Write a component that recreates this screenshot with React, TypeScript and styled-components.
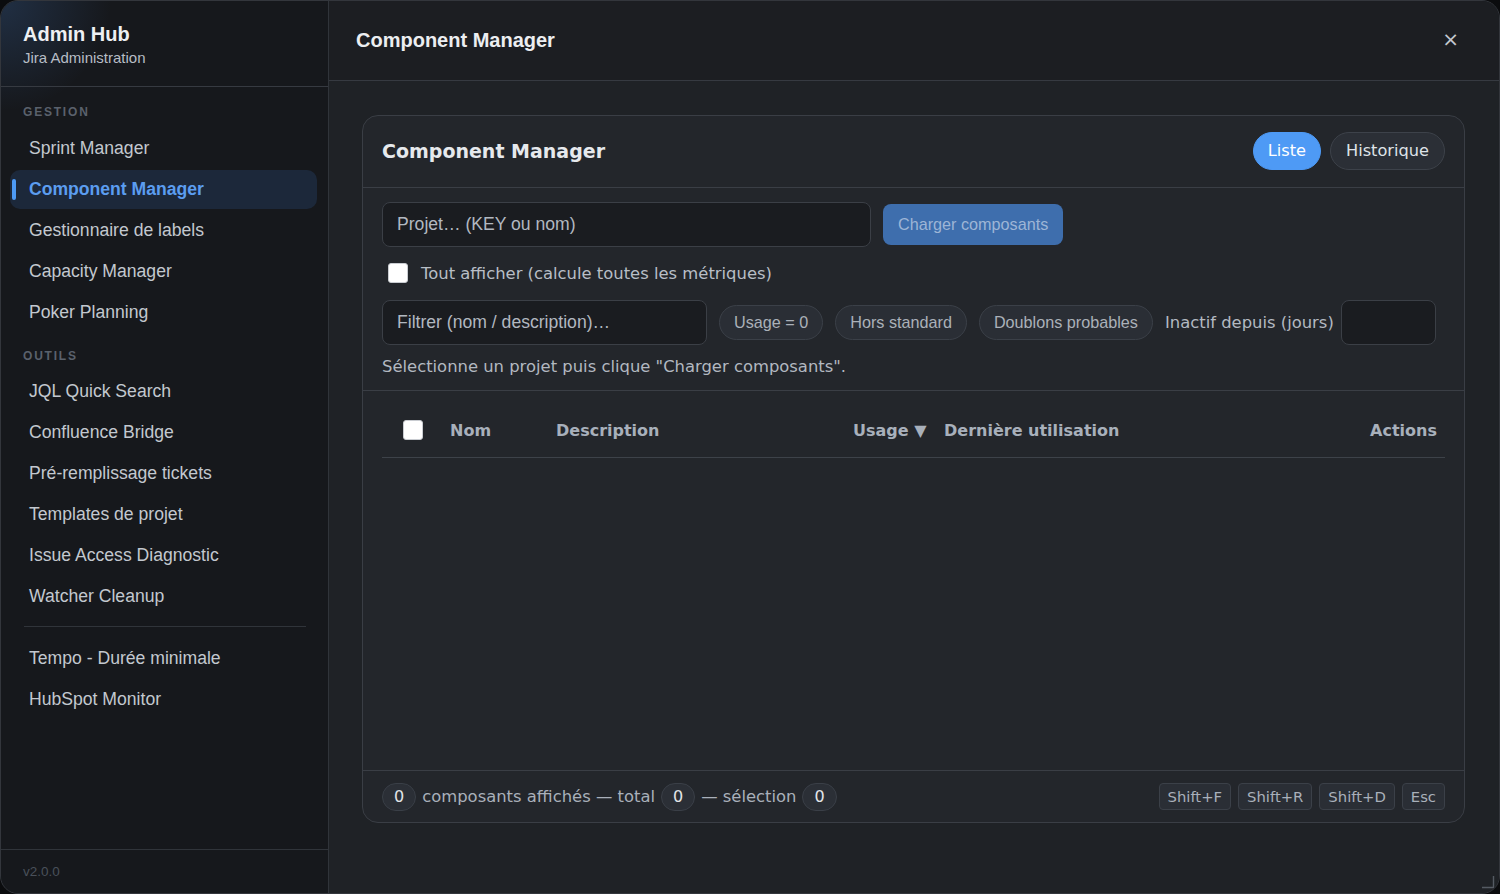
import styled, { createGlobalStyle } from "styled-components";

const GlobalStyle = createGlobalStyle`
  html, body {
    margin: 0;
    padding: 0;
    background: #0b0c0e;
  }
  * {
    box-sizing: border-box;
  }
`;

const gestion = [
  "Sprint Manager",
  "Component Manager",
  "Gestionnaire de labels",
  "Capacity Manager",
  "Poker Planning",
];

const outils = [
  "JQL Quick Search",
  "Confluence Bridge",
  "Pré-remplissage tickets",
  "Templates de projet",
  "Issue Access Diagnostic",
  "Watcher Cleanup",
];

const extras = ["Tempo - Durée minimale", "HubSpot Monitor"];

const filters = ["Usage = 0", "Hors standard", "Doublons probables"];

const shortcuts = ["Shift+F", "Shift+R", "Shift+D", "Esc"];

export default function App() {
  return (
    <>
      <GlobalStyle />
      <Shell>
        <Sidebar>
          <Brand>
            <BrandTitle>Admin Hub</BrandTitle>
            <BrandSub>Jira Administration</BrandSub>
          </Brand>
          <Nav>
            <SectionLabel>Gestion</SectionLabel>
            {gestion.map((item) => (
              <NavItem key={item} $active={item === "Component Manager"}>
                {item}
              </NavItem>
            ))}
            <SectionLabel $spaced>Outils</SectionLabel>
            {outils.map((item) => (
              <NavItem key={item}>{item}</NavItem>
            ))}
            <NavDivider />
            {extras.map((item) => (
              <NavItem key={item}>{item}</NavItem>
            ))}
          </Nav>
          <SidebarFooter>v2.0.0</SidebarFooter>
        </Sidebar>

        <Main>
          <TopBar>
            <TopTitle>Component Manager</TopTitle>
            <CloseButton>×</CloseButton>
          </TopBar>
          <Content>
            <Card>
              <CardHeader>
                <CardTitle>Component Manager</CardTitle>
                <Tabs>
                  <Tab $active>Liste</Tab>
                  <Tab>Historique</Tab>
                </Tabs>
              </CardHeader>

              <Toolbar>
                <Row>
                  <TextInput $width={489} placeholder="Projet… (KEY ou nom)" />
                  <PrimaryButton disabled>Charger composants</PrimaryButton>
                </Row>
                <CheckRow>
                  <Check type="checkbox" />
                  <CheckLabel>Tout afficher (calcule toutes les métriques)</CheckLabel>
                </CheckRow>
                <FilterRow>
                  <TextInput $width={325} placeholder="Filtrer (nom / description)…" />
                  {filters.map((f) => (
                    <Chip key={f}>{f}</Chip>
                  ))}
                  <InlineLabel>Inactif depuis (jours)</InlineLabel>
                  <TextInput $width={95} />
                </FilterRow>
                <Hint>Sélectionne un projet puis clique "Charger composants".</Hint>
              </Toolbar>

              <TableArea>
                <TableHead>
                  <HeadCell>
                    <Check type="checkbox" />
                  </HeadCell>
                  <HeadCell>Nom</HeadCell>
                  <HeadCell>Description</HeadCell>
                  <HeadCell>Usage ▼</HeadCell>
                  <HeadCell>Dernière utilisation</HeadCell>
                  <HeadCell $right>Actions</HeadCell>
                </TableHead>
              </TableArea>

              <CardFooter>
                <Stats>
                  <Count>0</Count>
                  <StatText>composants affichés — total</StatText>
                  <Count>0</Count>
                  <StatText>— sélection</StatText>
                  <Count>0</Count>
                </Stats>
                <Keys>
                  {shortcuts.map((k) => (
                    <Kbd key={k}>{k}</Kbd>
                  ))}
                </Keys>
              </CardFooter>
            </Card>
          </Content>
          <ResizeGrip width="14" height="14" viewBox="0 0 14 14">
            <path d="M1 12.5 H12.5 V1" fill="none" stroke="#555b63" strokeWidth="1.4" />
          </ResizeGrip>
        </Main>
      </Shell>
    </>
  );
}

const Shell = styled.div`
  width: 1500px;
  height: 894px;
  display: grid;
  grid-template-columns: 328px 1fr;
  border: 1px solid #33363c;
  border-radius: 18px;
  overflow: hidden;
  background: #1f2226;
`;

const Sidebar = styled.aside`
  display: flex;
  flex-direction: column;
  background: radial-gradient(circle at 0 0, rgba(70, 130, 210, 0.22), transparent 110px),
    #16181c;
  border-right: 1px solid #30343a;
  font-family: "Liberation Sans", Arial, sans-serif;
`;

const Brand = styled.div`
  height: 86px;
  padding: 21px 22px 0;
  border-bottom: 1px solid #363a41;
`;

const BrandTitle = styled.div`
  font-size: 20px;
  line-height: 24px;
  font-weight: 700;
  color: #eef0f3;
`;

const BrandSub = styled.div`
  margin-top: 2px;
  font-size: 15px;
  line-height: 20px;
  color: #b7bdc5;
`;

const Nav = styled.nav`
  flex: 1;
  display: flex;
  flex-direction: column;
  gap: 2px;
  padding: 18px 11px 0 9px;
`;

const SectionLabel = styled.div<{ $spaced?: boolean }>`
  margin: ${({ $spaced }) => ($spaced ? "15px 0 7px" : "0 0 8px")};
  padding-left: 13px;
  font-size: 12px;
  line-height: 14px;
  font-weight: 700;
  letter-spacing: 1.8px;
  text-transform: uppercase;
  color: #5a616c;
`;

const NavItem = styled.div<{ $active?: boolean }>`
  position: relative;
  height: 39px;
  display: flex;
  align-items: center;
  padding-left: 19px;
  border-radius: 10px;
  font-size: 17.6px;
  font-weight: ${({ $active }) => ($active ? 700 : 400)};
  color: ${({ $active }) => ($active ? "#5b9df0" : "#c3c8cf")};
  background: ${({ $active }) => ($active ? "#1c283a" : "transparent")};

  &::before {
    content: "";
    display: ${({ $active }) => ($active ? "block" : "none")};
    position: absolute;
    left: 2px;
    top: 9px;
    width: 4px;
    height: 21px;
    border-radius: 2px;
    background: #4d9af5;
  }
`;

const NavDivider = styled.div`
  height: 1px;
  margin: 8px 11px 10px 14px;
  background: #30343a;
`;

const SidebarFooter = styled.div`
  height: 44px;
  display: flex;
  align-items: center;
  padding-left: 22px;
  border-top: 1px solid #30343a;
  font-size: 13.5px;
  color: #49505a;
`;

const Main = styled.main`
  position: relative;
  display: flex;
  flex-direction: column;
  min-width: 0;
  background: #1f2226;
`;

const TopBar = styled.header`
  height: 80px;
  flex-shrink: 0;
  display: flex;
  align-items: center;
  justify-content: space-between;
  padding: 0 40px 1px 27px;
  background: #1c1e22;
  border-bottom: 1px solid #363a41;
`;

const TopTitle = styled.h1`
  margin: 0;
  font-family: "Liberation Sans", Arial, sans-serif;
  font-size: 20px;
  font-weight: 700;
  color: #eceef1;
`;

const CloseButton = styled.button`
  border: 0;
  background: none;
  padding: 0 0 2px;
  font-family: "DejaVu Sans", sans-serif;
  font-size: 20px;
  line-height: 1;
  color: #c3c8cf;
`;

const Content = styled.div`
  flex: 1;
  display: flex;
  padding: 34px 34px 70px 33px;
  min-height: 0;
`;

const Card = styled.section`
  flex: 1;
  display: flex;
  flex-direction: column;
  background: #23262b;
  border: 1px solid #3a3e45;
  border-radius: 16px;
  overflow: hidden;
  font-family: "DejaVu Sans", sans-serif;
`;

const CardHeader = styled.div`
  height: 72px;
  flex-shrink: 0;
  display: flex;
  align-items: center;
  justify-content: space-between;
  padding: 0 19px 2px 19px;
  border-bottom: 1px solid #3a3e45;
`;

const CardTitle = styled.h2`
  margin: 0;
  font-size: 19px;
  font-weight: 700;
  color: #e6e9ed;
`;

const Tabs = styled.div`
  display: flex;
  gap: 9px;
`;

const Tab = styled.button<{ $active?: boolean }>`
  height: 38px;
  padding: 0 ${({ $active }) => ($active ? "14px" : "15px")};
  border-radius: 19px;
  font-family: "DejaVu Sans", sans-serif;
  font-size: 16.2px;
  color: ${({ $active }) => ($active ? "#ffffff" : "#dfe3e8")};
  background: ${({ $active }) => ($active ? "#4e9af5" : "#2b2f36")};
  border: 1px solid ${({ $active }) => ($active ? "#4e9af5" : "#3d424a")};
`;

const Toolbar = styled.div`
  flex-shrink: 0;
  padding: 14px 19px 12px;
  border-bottom: 1px solid #3a3e45;
`;

const Row = styled.div`
  display: flex;
  align-items: center;
  gap: 12px;
`;

const TextInput = styled.input<{ $width: number }>`
  width: ${({ $width }) => $width}px;
  height: 45px;
  padding: 0 14px;
  background: #1a1c20;
  border: 1px solid #3b3f46;
  border-radius: 8px;
  font-family: "Liberation Sans", Arial, sans-serif;
  font-size: 17.6px;
  color: #e6e9ed;
  outline: none;

  &::placeholder {
    color: #b2b8c0;
  }
`;

const PrimaryButton = styled.button`
  height: 41px;
  padding: 0 15px;
  border: 0;
  border-radius: 8px;
  background: #3e6ead;
  font-family: "Liberation Sans", Arial, sans-serif;
  font-size: 16.2px;
  color: #9db5d6;
`;

const CheckRow = styled.label`
  display: flex;
  align-items: center;
  gap: 13px;
  margin-top: 15px;
  padding-left: 6px;
  height: 22px;
`;

const Check = styled.input`
  appearance: none;
  width: 20px;
  height: 20px;
  margin: 0;
  background: #ffffff;
  border: 1px solid #c9ccd1;
  border-radius: 3px;
`;

const CheckLabel = styled.span`
  font-size: 16.4px;
  color: #b8bec6;
`;

const FilterRow = styled(Row)`
  margin-top: 16px;
`;

const Chip = styled.button`
  height: 35px;
  padding: 0 14px;
  border-radius: 18px;
  background: #2a2e35;
  border: 1px solid #3b4048;
  font-family: "Liberation Sans", Arial, sans-serif;
  font-size: 16.2px;
  color: #abb1b9;
`;

const InlineLabel = styled.span`
  font-size: 16.4px;
  color: #b3b9c1;
  margin-right: -5px;
`;

const Hint = styled.p`
  margin: 11px 0 0;
  line-height: 22px;
  font-size: 16.4px;
  color: #b2b8c0;
`;

const TableArea = styled.div`
  flex: 1;
  padding: 12px 19px 0;
  border-bottom: 1px solid #3a3e45;
`;

const TableHead = styled.div`
  display: grid;
  grid-template-columns: 58px 106px 297px 91px 1fr auto;
  align-items: center;
  height: 55px;
  border-bottom: 1px solid #3d4249;
`;

const HeadCell = styled.div<{ $right?: boolean }>`
  display: flex;
  align-items: center;
  padding: ${({ $right }) => ($right ? "0 8px 0 0" : "0 0 0 10px")};
  justify-content: ${({ $right }) => ($right ? "flex-end" : "flex-start")};
  font-size: 16px;
  font-weight: 700;
  color: #a8b0bb;
  white-space: nowrap;

  &:first-child {
    padding-left: 21px;
  }
`;

const CardFooter = styled.div`
  height: 51px;
  flex-shrink: 0;
  display: flex;
  align-items: center;
  justify-content: space-between;
  padding: 0 19px;
`;

const Stats = styled.div`
  display: flex;
  align-items: center;
  gap: 6px;
`;

const Count = styled.span`
  height: 28px;
  min-width: 34px;
  display: inline-flex;
  align-items: center;
  justify-content: center;
  padding: 0 11px;
  border-radius: 14px;
  background: #2b2f36;
  border: 1px solid #3a3f47;
  font-size: 16px;
  color: #e2e5e9;
`;

const StatText = styled.span`
  font-size: 16.4px;
  color: #a9b0ba;
`;

const Keys = styled.div`
  display: flex;
  gap: 7px;
`;

const Kbd = styled.kbd`
  height: 27px;
  display: inline-flex;
  align-items: center;
  padding: 0 8px;
  border-radius: 4px;
  background: #2a2e35;
  border: 1px solid #3b4048;
  font-family: "DejaVu Sans", sans-serif;
  font-size: 14.8px;
  color: #a9b0ba;
`;

const ResizeGrip = styled.svg`
  position: absolute;
  right: 4px;
  bottom: 4px;
`;
